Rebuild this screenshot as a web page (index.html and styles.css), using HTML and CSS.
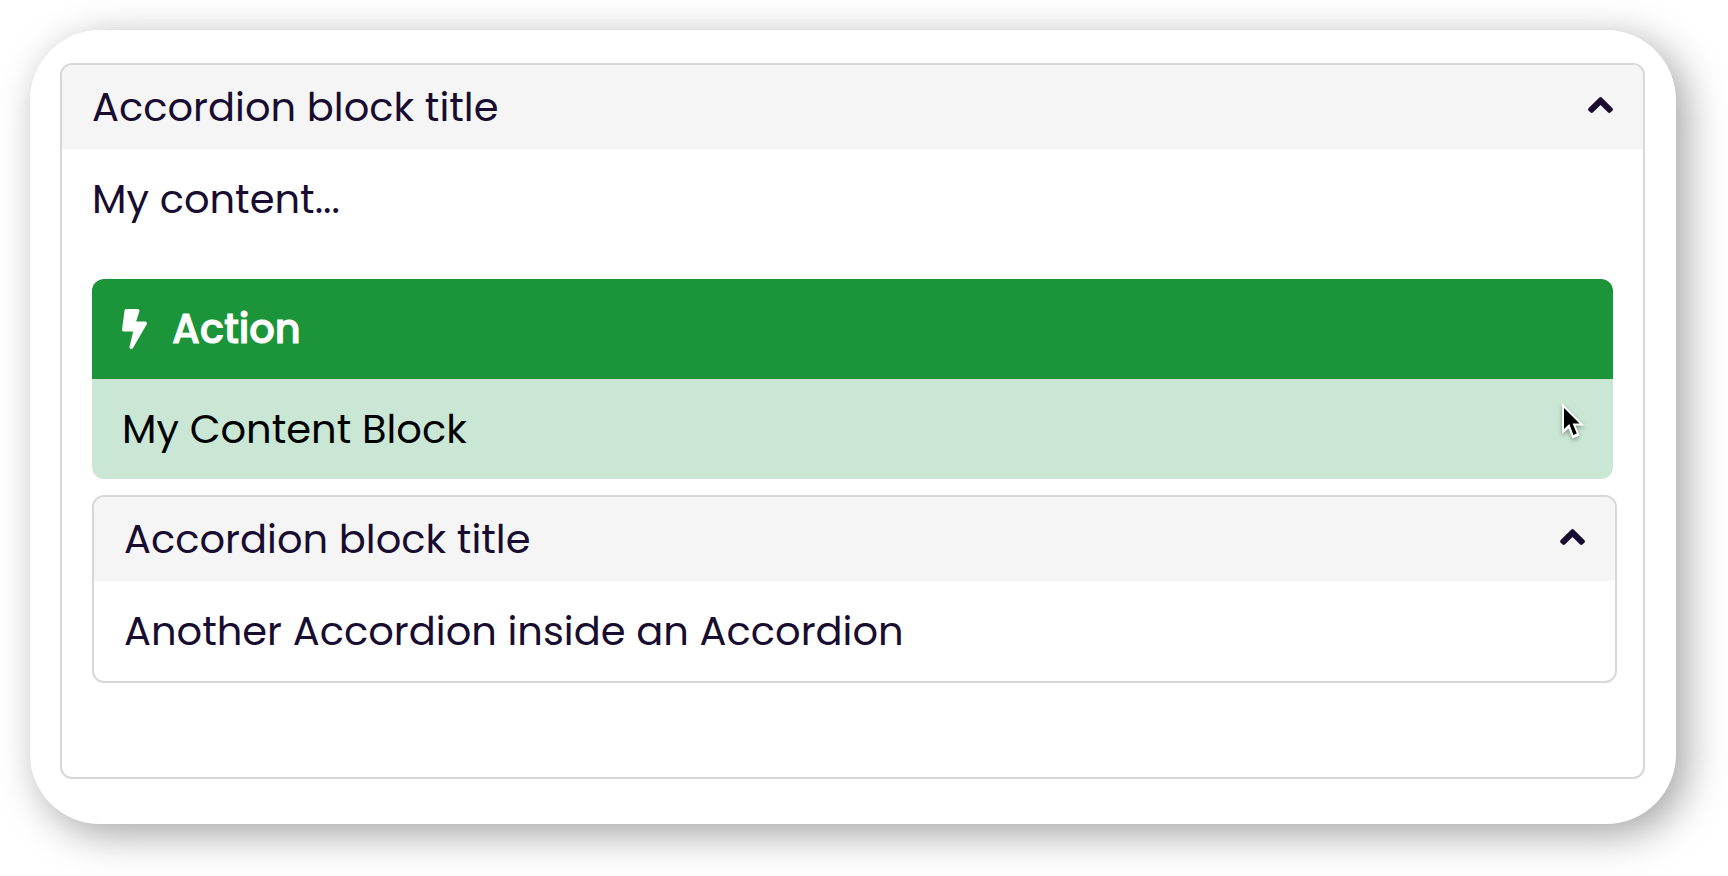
FILE: index.html
```html
<!DOCTYPE html>
<html lang="en">
<head>
    <meta charset="UTF-8">
    <meta name="viewport" content="width=device-width, initial-scale=1.0">
    <title>Accordion block</title>
    <link rel="stylesheet" href="styles.css">
</head>
<body>
    <main class="card">
        <details class="accordion" open>
            <summary class="accordion-title">
                <span>Accordion block title</span>
                <svg class="chevron" viewBox="0 0 25 20" aria-hidden="true">
                    <path d="M11.4 0.5Q12.5 -0.4 13.6 0.5L24.3 11.1Q25.5 12.4 24.3 13.7L22.7 15.3Q21.3 16.6 19.9 15.3L12.5 8L5.1 15.3Q3.7 16.6 2.3 15.3L0.7 13.7Q-0.5 12.4 0.7 11.1Z"/>
                </svg>
            </summary>
            <div class="accordion-content outer">
                <p>My content...</p>

                <section class="action">
                    <h2 class="action-title">
                        <svg class="bolt" viewBox="0 0 320 512" aria-hidden="true">
                            <path d="M296 160H180.6l42.6-129.8C227.2 15 215.7 0 200 0H56C44 0 33.8 8.9 32.2 20.8l-32 240C-1.7 275.2 9.5 288 24 288h118.7L96.6 482.5c-3.6 15.2 8 29.5 23.3 29.5 8.4 0 16.4-4.4 20.8-12l176-304c9.3-15.9-2.2-36-20.7-36z"/>
                        </svg>
                        Action
                    </h2>
                    <div class="action-content">
                        <p>My Content Block</p>
                        <svg class="cursor" viewBox="0 0 24 38" aria-hidden="true">
                            <path class="cursor-edge" d="M1 0V31L7.6 25.4L11.6 35.4L18.6 32.4L14.5 22.4H23.3Z"/>
                            <path d="M3 5V26L8.3 21L12.4 32L15.8 30.4L11.6 20.4H18.6Z"/>
                        </svg>
                    </div>
                </section>

                <details class="accordion" open>
                    <summary class="accordion-title">
                        <span>Accordion block title</span>
                        <svg class="chevron" viewBox="0 0 25 20" aria-hidden="true">
                            <path d="M11.4 0.5Q12.5 -0.4 13.6 0.5L24.3 11.1Q25.5 12.4 24.3 13.7L22.7 15.3Q21.3 16.6 19.9 15.3L12.5 8L5.1 15.3Q3.7 16.6 2.3 15.3L0.7 13.7Q-0.5 12.4 0.7 11.1Z"/>
                        </svg>
                    </summary>
                    <div class="accordion-content">
                        <p>Another Accordion inside an Accordion</p>
                    </div>
                </details>
            </div>
        </details>
    </main>
</body>
</html>
```
FILE: styles.css
```css
body {
    margin: 0;
    background-color: #fff;
    color: #180c30;
    font-family: Poppins, Inter, sans-serif;
    font-size: 40px;
    line-height: 60px;
}
p, h2 {
    margin: 0;
}
.card {
    margin: 30px 52px 52px 30px;
    padding: 33px 31px 45px 30px;
    border-radius: 70px;
    background-color: #fff;
    box-shadow: 10px 10px 40px rgba(0, 0, 0, 0.36);
}
.accordion {
    border: 2px solid #d8d8d8;
    border-radius: 12px;
}
/* the nested accordion is full width plus its own borders */
.accordion .accordion {
    width: 100%;
    margin-top: 16px;
}
.accordion-title {
    display: flex;
    justify-content: space-between;
    align-items: center;
    padding: 12px 30px;
    border-radius: 10px 10px 0 0;
    background-color: #f5f5f5;
    cursor: pointer;
    list-style: none;
}
.accordion-content {
    padding: 20px 30px;
}
.accordion-content.outer {
    padding-bottom: 94px;
}
.chevron {
    width: 25px;
    height: 20px;
    fill: #180c30;
}
.action {
    margin-top: 50px;
    border-radius: 12px;
    overflow: hidden;
    color: #000;
}
.action-title {
    display: flex;
    align-items: center;
    gap: 25px;
    padding: 20px 30px;
    background-color: #1c953a;
    color: #fff;
    font-size: 40px;
    font-weight: 500;
    -webkit-text-stroke: 1px #fff;
}
.bolt {
    width: 25px;
    height: 40px;
    fill: #fff;
}
.action-content {
    position: relative;
    padding: 20px 30px;
    background-color: #cae7d5;
}
.cursor {
    position: absolute;
    top: 24px;
    right: 28px;
    width: 24px;
    height: 38px;
    overflow: visible;
    filter: drop-shadow(0 2px 2px rgba(0, 0, 0, 0.35));
}
.cursor-edge {
    fill: #fff;
}
```
